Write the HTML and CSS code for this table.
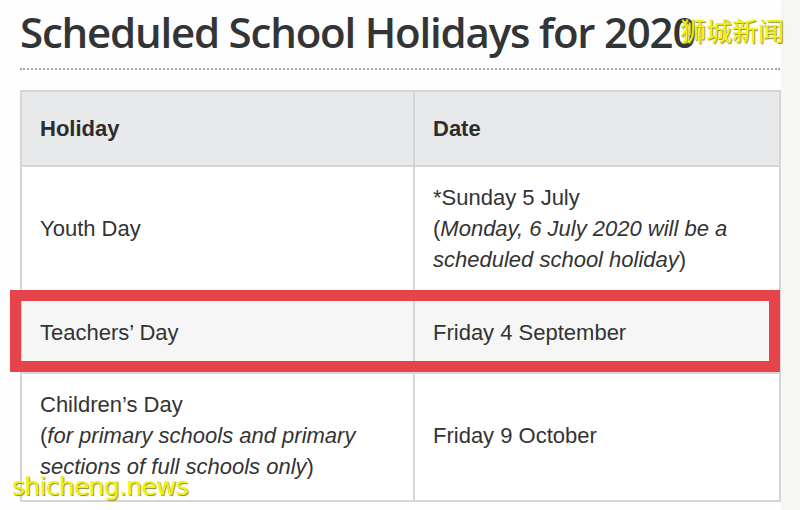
FILE: index.html
```html
<!DOCTYPE html>
<html>
<head>
<meta charset="utf-8">
<link rel="stylesheet" href="styles.css">
</head>
<body>
<div class="page">
  <h1 class="title">Scheduled School Holidays for 2020</h1>
  <div class="rule"></div>
  <div class="table-wrap">
    <table class="holidays">
      <colgroup><col class="c1"><col class="c2"></colgroup>
      <thead>
        <tr class="head"><th>Holiday</th><th>Date</th></tr>
      </thead>
      <tbody>
        <tr class="r1"><td>Youth Day</td><td>*Sunday 5 July<br>(<i>Monday, 6 July 2020 will be a scheduled school holiday</i>)</td></tr>
        <tr class="r2"><td>Teachers’ Day</td><td>Friday 4 September</td></tr>
        <tr class="r3"><td>Children’s Day<br>(<i>for primary schools and primary sections of full schools only</i>)</td><td>Friday 9 October</td></tr>
      </tbody>
    </table>
    <div class="highlight"></div>
  </div>
  <div class="wm-cn">狮城新闻</div>
  <div class="wm-en">shicheng.news</div>
</div>
</body>
</html>
```
FILE: styles.css
```css
html, body {
  margin: 0;
  padding: 0;
}
body {
  background: #f6f6f2;
  width: 800px;
  height: 510px;
  overflow: hidden;
}
.page {
  position: relative;
  width: 781px;
  height: 510px;
  background: #fefefe;
  padding: 0 0 0 20px;
  box-sizing: border-box;
}
.title {
  margin: 0;
  padding-top: 7px;
  height: 58px;
  box-sizing: border-box;
  font-family: "Open Sans", sans-serif;
  font-weight: 600;
  font-size: 42px;
  line-height: 50px;
  color: #333436;
  letter-spacing: -1.2px;
  white-space: nowrap;
}
.rule {
  width: 760px;
  height: 0;
  margin-top: 10px;
  border-top: 2px dotted #a4a4a4;
}
.table-wrap {
  position: relative;
  margin-top: 20px;
  width: 761px;
}
.holidays {
  border-collapse: collapse;
  width: 761px;
  table-layout: fixed;
  font-family: "Liberation Sans", Arial, sans-serif;
  font-size: 22px;
  line-height: 31px;
  color: #333;
}
.c1 { width: 393px; }
.holidays th, .holidays td {
  border: 2px solid #d4d5d7;
  padding: 0 18px;
  text-align: left;
  vertical-align: middle;
}
.holidays th {
  font-weight: bold;
  background: #e8e9eb;
  height: 73px;
  color: #2c2d2f;
}
.r1 td { height: 123px; background: #fff; }
.r2 td { height: 80px; background: #f6f6f6; }
.r3 td { height: 122px; padding-bottom: 4px; background: #fff; }
.holidays td i { font-style: italic; }
.highlight {
  position: absolute;
  left: -10px;
  top: 200px;
  width: 770px;
  height: 82px;
  box-sizing: border-box;
  border: 11px solid #e7434a;
}
.wm-cn {
  position: absolute;
  left: 680px;
  top: 13px;
  font-family: "Noto Sans CJK SC", sans-serif;
  font-size: 26px;
  line-height: 34px;
  color: #f2f20a;
  text-shadow: 1px 1px 1px #8a8a30;
  white-space: nowrap;
}
.wm-en {
  position: absolute;
  left: 12px;
  top: 470px;
  font-family: "DejaVu Sans", sans-serif;
  font-size: 25px;
  line-height: 34px;
  color: #f2f20a;
  text-shadow: 1px 1px 1px #8a8a30;
  letter-spacing: -0.7px;
  white-space: nowrap;
}
```
